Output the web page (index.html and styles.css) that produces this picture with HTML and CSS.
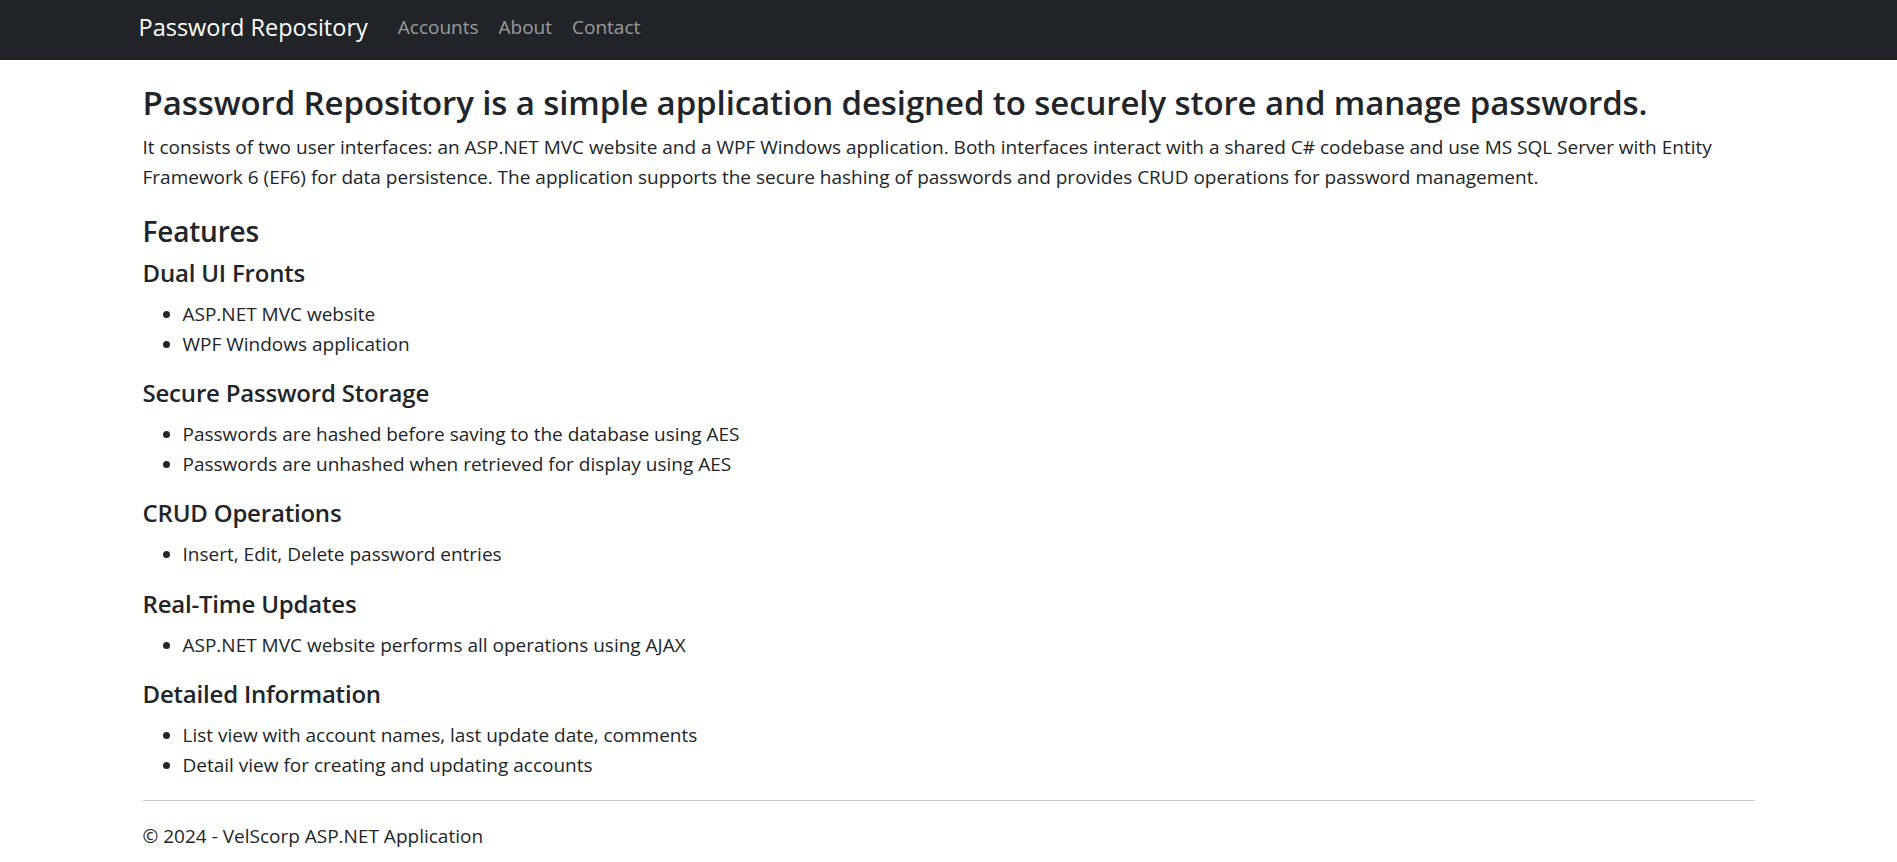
FILE: index.html
```html
<!DOCTYPE html>
<html lang="en">
<head>
<meta charset="utf-8">
<title>Home Page - Password Repository</title>
<link rel="stylesheet" href="styles.css">
</head>
<body>
<nav class="navbar">
  <div class="nav-inner">
    <a class="brand" href="#">Password Repository</a>
    <ul class="nav-links">
      <li><a class="nav-link" href="#">Accounts</a></li>
      <li><a class="nav-link" href="#">About</a></li>
      <li><a class="nav-link" href="#">Contact</a></li>
    </ul>
  </div>
</nav>
<div class="container">
  <main class="content">
    <h3 class="title">Password Repository is a simple application designed to securely store and manage passwords.</h3>
    <p class="lead-text">It consists of two user interfaces: an ASP.NET MVC website and a WPF Windows application. Both interfaces interact with a shared C# codebase and use MS SQL Server with Entity Framework 6 (EF6) for data persistence. The application supports the secure hashing of passwords and provides CRUD operations for password management.</p>
    <h4 class="section-title">Features</h4>
    <h5 class="feature-title">Dual UI Fronts</h5>
    <ul class="feature-list">
      <li>ASP.NET MVC website</li>
      <li>WPF Windows application</li>
    </ul>
    <h5 class="feature-title">Secure Password Storage</h5>
    <ul class="feature-list">
      <li>Passwords are hashed before saving to the database using AES</li>
      <li>Passwords are unhashed when retrieved for display using AES</li>
    </ul>
    <h5 class="feature-title">CRUD Operations</h5>
    <ul class="feature-list">
      <li>Insert, Edit, Delete password entries</li>
    </ul>
    <h5 class="feature-title">Real-Time Updates</h5>
    <ul class="feature-list">
      <li>ASP.NET MVC website performs all operations using AJAX</li>
    </ul>
    <h5 class="feature-title">Detailed Information</h5>
    <ul class="feature-list">
      <li>List view with account names, last update date, comments</li>
      <li>Detail view for creating and updating accounts</li>
    </ul>
  </main>
  <hr class="divider">
  <footer class="footer">
    <p>&copy; 2024 - VelScorp ASP.NET Application</p>
  </footer>
</div>
</body>
</html>
```

FILE: styles.css
```css
html, body {
  margin: 0;
  padding: 0;
}

body {
  font-family: "Segoe UI", "Open Sans", "Noto Sans", sans-serif;
  font-size: 19px;
  line-height: 30px;
  color: #212529;
  background: #fff;
  overflow: hidden;
}

.navbar {
  background: #212529;
  height: 60px;
  margin-bottom: 22.5px;
}

.nav-inner {
  max-width: 1620px;
  margin: 0 auto;
  height: 54px;
  display: flex;
  align-items: center;
}

.brand {
  color: #fff;
  font-size: 23.5px;
  line-height: 35px;
  text-decoration: none;
  margin-right: 20px;
}

.nav-links {
  display: flex;
  list-style: none;
  margin: 0;
  padding: 0;
}

.nav-link {
  display: block;
  padding: 0 10px;
  color: rgba(255, 255, 255, 0.55);
  text-decoration: none;
  font-size: 19px;
  line-height: 28.5px;
}

.container {
  max-width: 1612px;
  margin: 0 auto;
}

.title,
.section-title,
.feature-title {
  margin: 0;
  font-weight: 600;
  color: #212529;
}

.title {
  font-size: 33px;
  line-height: 39.6px;
  letter-spacing: -0.1px;
  margin-bottom: 10px;
}

.section-title {
  font-size: 28px;
  line-height: 38px;
  letter-spacing: -0.2px;
  margin-bottom: 9px;
}

.feature-title {
  font-size: 24px;
  line-height: 28.8px;
  letter-spacing: -0.2px;
  margin-bottom: 11.2px;
}

.lead-text {
  margin: 0 0 20px;
}

.feature-list {
  margin: 0 0 20.2px;
  padding-left: 40px;
}

.divider {
  margin: 20px 0;
  border: 0;
  border-top: 1px solid #c8c9ca;
}

.footer p {
  margin: 0;
}
```
